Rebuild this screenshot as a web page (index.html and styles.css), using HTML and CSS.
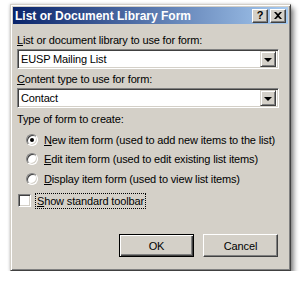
FILE: index.html
```html
<!DOCTYPE html>
<html lang="en">
<head>
    <meta charset="UTF-8">
    <meta name="viewport" content="width=device-width, initial-scale=1.0">
    <title>List or Document Library Form</title>
    <link rel="stylesheet" href="styles.css">
</head>
<body>
    <div class="dialog">
        <div class="titlebar">
            <span class="title">List or Document Library Form</span>
            <div class="title-buttons">
                <span class="tbtn">?</span>
                <span class="tbtn">
                    <svg width="8" height="7" viewBox="0 0 8 7"><path d="M0 0h2l2 2 2-2h2L5 3.5 8 7H6L4 5 2 7H0l3-3.5z" fill="#000"/></svg>
                </span>
            </div>
        </div>

        <div class="content">
            <div class="label label-first"><u>L</u>ist or document library to use for form:</div>
            <div class="combo">
                <span class="combo-text">EUSP Mailing List</span>
                <span class="combo-arrow"></span>
            </div>

            <div class="label"><u>C</u>ontent type to use for form:</div>
            <div class="combo">
                <span class="combo-text">Contact</span>
                <span class="combo-arrow"></span>
            </div>

            <div class="label label-type">Type of form to create:</div>
            <div class="radio-group">
                <div class="option"><span class="radio checked"></span><span><u>N</u>ew item form (used to add new items to the list)</span></div>
                <div class="option"><span class="radio"></span><span><u>E</u>dit item form (used to edit existing list items)</span></div>
                <div class="option"><span class="radio"></span><span><u>D</u>isplay item form (used to view list items)</span></div>
            </div>

            <div class="check-row">
                <span class="checkbox"></span>
                <span class="focus"><u>S</u>how standard toolbar</span>
            </div>

            <div class="buttons">
                <div class="btn btn-default"><span>OK</span></div>
                <div class="btn"><span>Cancel</span></div>
            </div>
        </div>
    </div>
</body>
</html>
```

FILE: styles.css
```css
body {
    margin: 0;
    background: #fff;
    font-family: "Liberation Sans", Arial, sans-serif;
    font-size: 11px;
    color: #000;
}

.dialog {
    margin: 4px 0 0 10px;
    width: 281px;
    height: 267px;
    box-sizing: border-box;
    background: #d4d0c8;
    border: 1px solid;
    border-color: #d4d0c8 #404040 #404040 #d4d0c8;
    box-shadow: inset 1px 1px #fff, inset -1px -1px #808080,
        0 0 3px rgba(0, 0, 0, 0.2), 3px 4px 5px rgba(0, 0, 0, 0.45);
    padding: 2px;
    display: flex;
    flex-direction: column;
}

.titlebar {
    height: 17px;
    background: linear-gradient(to right, #0a246a, #a6caf0);
    display: flex;
    align-items: center;
    justify-content: space-between;
    padding: 0 2px 0 2px;
}

.title {
    color: #fff;
    font-weight: bold;
    font-size: 12px;
}

.title-buttons {
    display: flex;
    gap: 2px;
}

.tbtn {
    width: 16px;
    height: 14px;
    box-sizing: border-box;
    background: #d4d0c8;
    border: 1px solid;
    border-color: #fff #404040 #404040 #fff;
    box-shadow: inset -1px -1px #808080;
    display: flex;
    align-items: center;
    justify-content: center;
    font-weight: bold;
    font-size: 11px;
    line-height: 1;
}

.content {
    padding: 0 9px 0 4px;
    display: flex;
    flex-direction: column;
    flex: 1;
    letter-spacing: -0.15px;
    white-space: nowrap;
}

.label {
    line-height: 14px;
    margin-top: 3px;
}

.label-first {
    margin-top: 9px;
}

.label-type {
    margin-top: 4px;
}

.combo {
    margin-top: 2px;
    height: 20px;
    box-sizing: border-box;
    background: #fff;
    border: 1px solid;
    border-color: #808080 #fff #fff #808080;
    box-shadow: inset 1px 1px #404040, inset -1px -1px #d4d0c8;
    display: flex;
    align-items: center;
    padding: 2px;
}

.combo-text {
    flex: 1;
    padding-left: 1px;
}

.combo-arrow {
    width: 16px;
    height: 16px;
    box-sizing: border-box;
    background: #d4d0c8;
    border: 1px solid;
    border-color: #d4d0c8 #404040 #404040 #d4d0c8;
    box-shadow: inset 1px 1px #fff, inset -1px -1px #808080;
    display: flex;
    align-items: center;
    justify-content: center;
}

.combo-arrow::after {
    content: "";
    border-left: 4px solid transparent;
    border-right: 4px solid transparent;
    border-top: 4px solid #000;
    margin-top: 1px;
}

.radio-group {
    margin-top: 4px;
    padding-left: 9px;
}

.option {
    height: 19.5px;
    display: flex;
    align-items: center;
    gap: 6px;
}

.radio {
    width: 12px;
    height: 12px;
    box-sizing: border-box;
    border-radius: 50%;
    background: #fff;
    border: 1px solid;
    border-color: #808080 #fff #fff #808080;
    box-shadow: inset 1px 1px #404040, inset -1px -1px #d4d0c8;
    display: flex;
    align-items: center;
    justify-content: center;
}

.radio.checked::after {
    content: "";
    width: 4px;
    height: 4px;
    border-radius: 50%;
    background: #000;
}

.check-row {
    margin-top: 5px;
    display: flex;
    align-items: center;
    gap: 5px;
    padding-left: 1px;
}

.checkbox {
    width: 13px;
    height: 13px;
    box-sizing: border-box;
    background: #fff;
    border: 1px solid;
    border-color: #808080 #fff #fff #808080;
    box-shadow: inset 1px 1px #404040, inset -1px -1px #d4d0c8;
}

.focus {
    outline: 1px dotted #000;
    padding: 0 1px;
    line-height: 14px;
}

.buttons {
    margin-top: auto;
    margin-bottom: 11px;
    display: flex;
    justify-content: flex-end;
    gap: 9px;
    padding-right: 1px;
}

.btn {
    width: 75px;
    height: 23px;
    box-sizing: border-box;
    background: #d4d0c8;
    border: 1px solid;
    border-color: #fff #404040 #404040 #fff;
    box-shadow: inset -1px -1px #808080;
    display: flex;
    align-items: center;
    justify-content: center;
}

.btn-default {
    border: 1px solid #000;
    box-shadow: inset 1px 1px #fff, inset -1px -1px #404040, inset -2px -2px #808080;
}
```
